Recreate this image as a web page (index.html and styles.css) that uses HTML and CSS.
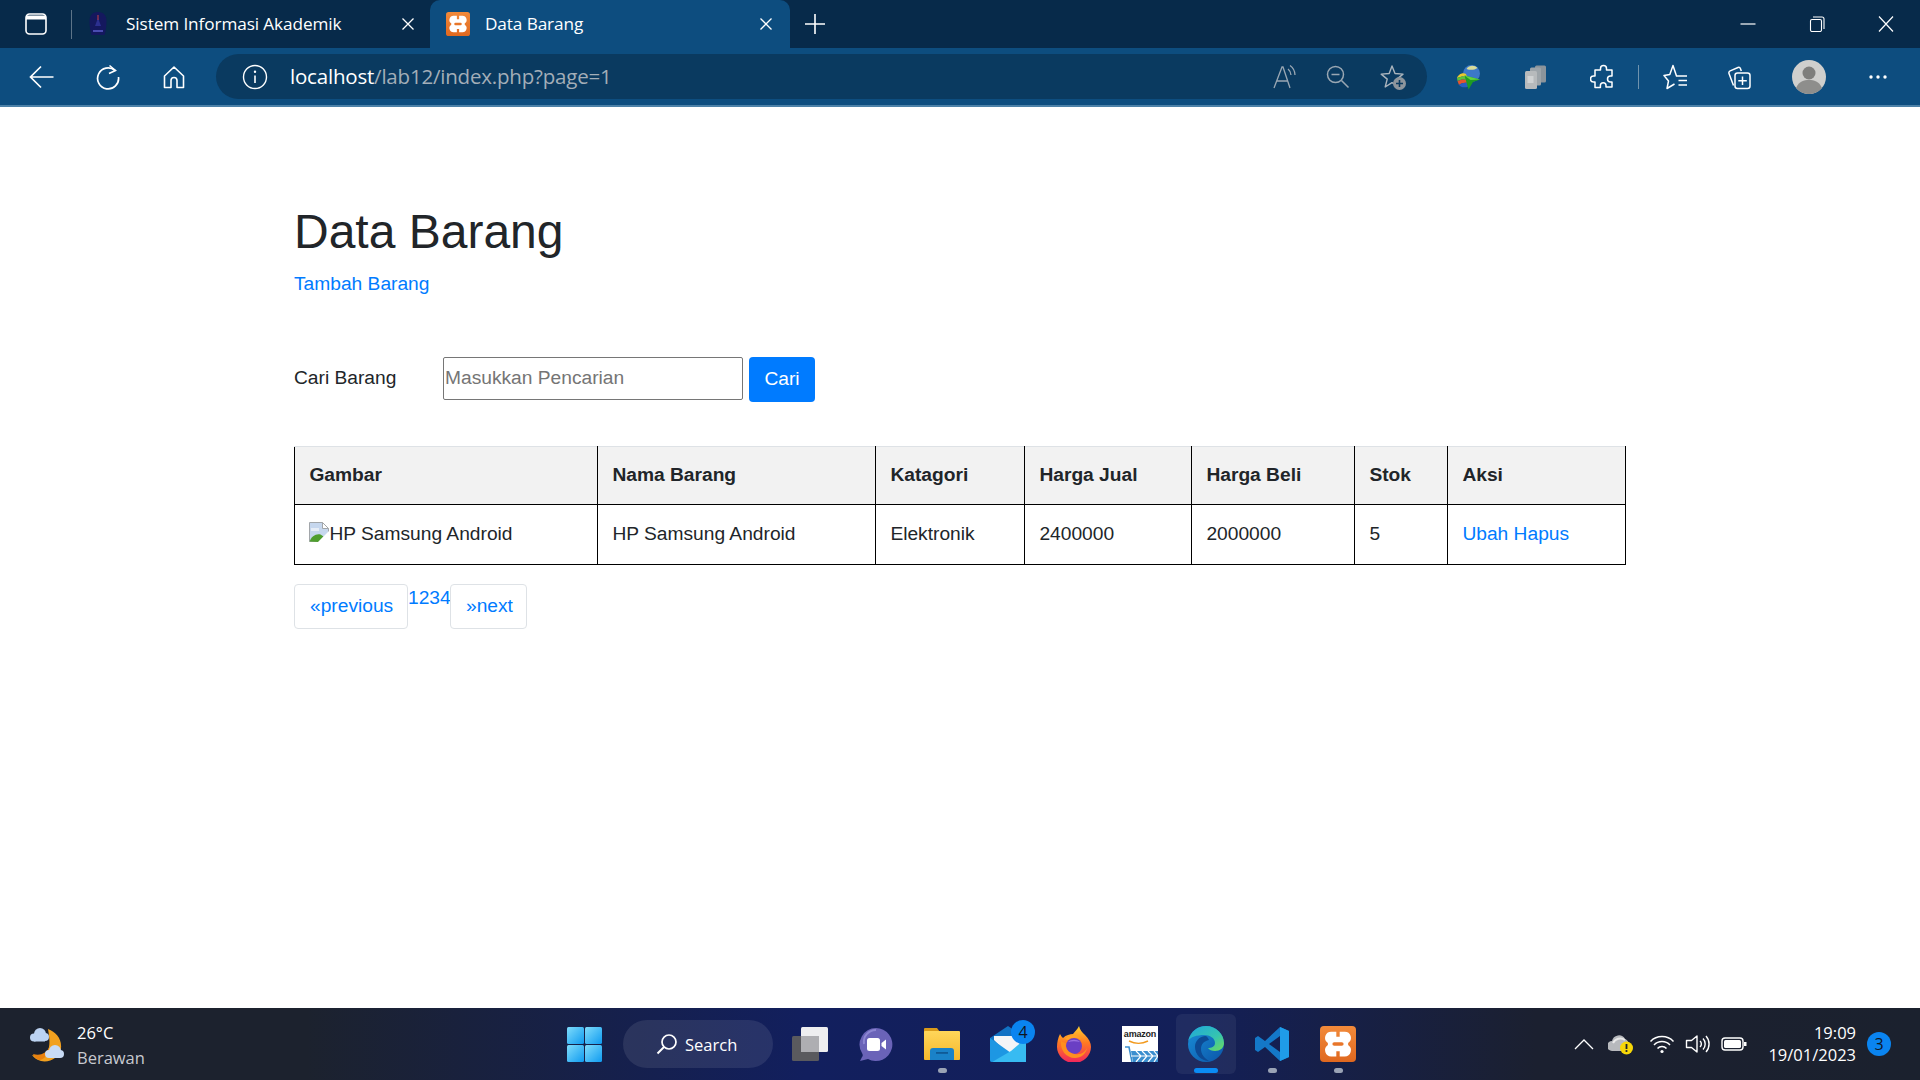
FILE: index.html
```html
<!DOCTYPE html>
<html lang="id">
<head>
<meta charset="utf-8">
<title>Data Barang</title>
<link rel="stylesheet" href="styles.css">
</head>
<body>
<svg class="defs" width="0" height="0" aria-hidden="true">
  <defs>
    <linearGradient id="xg" x1="0" y1="0" x2="0" y2="1"><stop offset="0" stop-color="#f28a3a"/><stop offset="1" stop-color="#e0681f"/></linearGradient>
    <linearGradient id="wing" x1="0" y1="0" x2="1" y2="1"><stop offset="0" stop-color="#7fdcfb"/><stop offset="1" stop-color="#0f9bf0"/></linearGradient>
    <linearGradient id="edge1" x1="0" y1="0" x2="1" y2="1"><stop offset="0" stop-color="#1fa6dc"/><stop offset=".6" stop-color="#35c4b0"/><stop offset="1" stop-color="#6fdc5a"/></linearGradient>
    <linearGradient id="edge2" x1="0" y1="0" x2="1" y2="1"><stop offset="0" stop-color="#1a8fd8"/><stop offset="1" stop-color="#0b55a8"/></linearGradient>
    <linearGradient id="fox" x1="0" y1="0" x2="0" y2="1"><stop offset="0" stop-color="#ffd12e"/><stop offset=".45" stop-color="#ff7a22"/><stop offset="1" stop-color="#f0245e"/></linearGradient>
    <linearGradient id="folder" x1="0" y1="0" x2="0" y2="1"><stop offset="0" stop-color="#ffd65a"/><stop offset="1" stop-color="#f6b82c"/></linearGradient>
    <symbol id="xampp" viewBox="0 0 32 32">
      <rect x="0" y="0" width="32" height="32" rx="3.500" fill="url(#xg)"/>
      <path d="M10 5H14.500V9.500H17.500V5H22a5.500 5.500 0 0 1 3 10.100V16.900A5.500 5.500 0 0 1 22 27H17.500V22.500H14.500V27H10a5.500 5.500 0 0 1-3-10.100V15.100A5.500 5.500 0 0 1 10 5z" fill="#fff"/>
      <rect x="11" y="14.400" width="10" height="3.200" rx="1.600" fill="#e8762a"/>
    </symbol>
  </defs>
</svg>

<header class="browser">
  <div class="tabstrip">
    <div class="strip-btn">
      <svg class="ic-24" viewBox="0 0 24 24"><rect x="2" y="2" width="20" height="20" rx="3.500" fill="none" stroke="#fff" stroke-width="1.600"/><path d="M2 5.500h20" stroke="#fff" stroke-width="4"/></svg>
    </div>
    <div class="strip-sep"></div>
    <div class="tab">
      <svg class="fav-sia" viewBox="0 0 20 26"><path d="M10 1C4 1 1.500 5 1.500 10c0 6 1 11 2 14h13c1-3 2-8 2-14C18.500 5 16 1 10 1z" fill="#14185e"/><path d="M10 7l3 8H7z" fill="#2c2f90"/><rect x="9.400" y="4" width="1.200" height="5" fill="#a83a4a"/><rect x="5" y="19" width="10" height="2" fill="#4a4cb0"/></svg>
      <span class="tab-title">Sistem Informasi Akademik</span>
      <svg class="tab-x" viewBox="0 0 12 12"><path d="M.5.5l11 11M11.500.5l-11 11" stroke="#fff" stroke-width="1.300"/></svg>
    </div>
    <div class="tab tab-active">
      <svg class="fav-x"><use href="#xampp"/></svg>
      <span class="tab-title">Data Barang</span>
      <svg class="tab-x" viewBox="0 0 12 12"><path d="M.5.5l11 11M11.500.5l-11 11" stroke="#fff" stroke-width="1.300"/></svg>
    </div>
    <div class="new-tab">
      <svg class="ic-24" viewBox="0 0 24 24"><path d="M12 2v20M2 12h20" stroke="#fff" stroke-width="1.600"/></svg>
    </div>
    <div class="win-controls">
      <div class="win-btn"><svg class="ic-16" viewBox="0 0 16 16"><path d="M0.500 8h15" stroke="#fff" stroke-width="1.200"/></svg></div>
      <div class="win-btn"><svg class="ic-16" viewBox="0 0 16 16"><rect x="1.500" y="3.500" width="11" height="12" rx="1.500" fill="none" stroke="#fff" stroke-width="1.100"/><path d="M4 1h9a2 2 0 0 1 2 2v10" fill="none" stroke="#fff" stroke-width="1.100"/></svg></div>
      <div class="win-btn"><svg class="ic-16" viewBox="0 0 16 16"><path d="M1 0.500l14 15M15 0.500L1 15.500" stroke="#fff" stroke-width="1.200"/></svg></div>
    </div>
  </div>

  <div class="toolbar">
    <div class="tool-btn"><svg class="ic-26" viewBox="0 0 26 26"><path d="M1.500 13h23M12 2.500L1.500 13 12 23.500" fill="none" stroke="#fff" stroke-width="1.700"/></svg></div>
    <div class="tool-btn"><svg class="ic-26" viewBox="0 0 26 26"><path d="M20 6.500A10.500 10.500 0 1 0 23.500 13" fill="none" stroke="#fff" stroke-width="1.700"/><path d="M14.500 1.500l6 5-6.500 3" fill="none" stroke="#fff" stroke-width="1.600"/></svg></div>
    <div class="tool-btn"><svg class="ic-26" viewBox="0 0 26 26"><path d="M13 3L3.500 12v11.500h6.500v-7a3 3 0 0 1 6 0v7h6.500V12z" fill="none" stroke="#fff" stroke-width="1.600" stroke-linejoin="round"/></svg></div>
    <div class="omnibox">
      <svg class="omni-info" viewBox="0 0 26 26"><circle cx="13" cy="13" r="11.500" fill="none" stroke="#fff" stroke-width="1.400"/><path d="M13 11.500v7.500" stroke="#fff" stroke-width="1.600"/><circle cx="13" cy="7.800" r="1.200" fill="#fff"/></svg>
      <span class="url"><span class="url-host">localhost</span>/lab12/index.php?page=1</span>
      <div class="omni-actions">
        <svg class="ic-26 omni-read" viewBox="0 0 26 26"><path d="M2 24L10 3h1l7 21M5 17h11" fill="none" stroke="#9aa7b3" stroke-width="1.300"/><path d="M16 5a8 8 0 0 1 3 6M18 1.500a12 12 0 0 1 5 9.500" fill="none" stroke="#9aa7b3" stroke-width="1.300"/></svg>
        <svg class="ic-26" viewBox="0 0 26 26"><circle cx="10.500" cy="10.500" r="8" fill="none" stroke="#9aa7b3" stroke-width="1.500"/><path d="M6.500 10.500h8M16.500 16.500l7 7" stroke="#9aa7b3" stroke-width="1.500"/></svg>
        <svg class="ic-26 omni-fav" viewBox="0 0 26 26"><path d="M12 2l3 7.500 8 .6-6 5 2 7.900-7-4.300-6.800 4.300 2-7.900-6-5 8-.6z" fill="none" stroke="#aab4bd" stroke-width="1.400" stroke-linejoin="round"/><circle cx="19.500" cy="19.500" r="6.500" fill="#8d959c"/><path d="M19.500 16v7M16 19.500h7" stroke="#0a3a60" stroke-width="1.600"/></svg>
      </div>
    </div>
    <div class="tool-btn tool-first"><svg class="ic-26" viewBox="0 0 26 26"><circle cx="15.500" cy="9.500" r="8.500" fill="#3c78c8"/><path d="M10.500 5c2-3.500 8-4.500 11-1-3 2-7 2.500-11 1z" fill="#d9dc9a"/><path d="M1 14c1-3 5-6 9-4l1 3c-4-1-7 0-10 1z" fill="#e8c92e"/><path d="M1 14c3-1 7-2 10-1v3c-3-1-7-.5-9.500 1z" fill="#5cc23a"/><path d="M1.500 17c3-1.500 6.500-2 9.500-1l.5 3c-3-.5-6 0-8.500 2z" fill="#e3552e"/><path d="M3 21c2.500-2 5.500-2.500 8.500-2l1 3.500c-4 1.500-7.500 1-9.500-1.500z" fill="#2a5ec0"/><path d="M8.500 11.500L24 15.500l-7 2.500-4.500 7.500z" fill="#1e9b22"/><path d="M8.500 11.500L24 15.500l-9.500.5z" fill="#62d23c"/></svg></div>
    <div class="tool-btn"><svg class="ic-26" viewBox="0 0 26 26"><rect x="13" y="1.500" width="11" height="17" rx="1.500" fill="#8b949b"/><rect x="8" y="3.500" width="11" height="18" rx="1.500" fill="#9da4a9"/><rect x="3" y="7" width="12" height="18" rx="1.500" fill="#b7babc"/><rect x="5.500" y="12" width="6" height="7" fill="#d0d2d3"/></svg></div>
    <div class="tool-btn"><svg class="ic-26 nudge-right" viewBox="0 0 26 26"><path d="M10.500 6V4.500a3 3 0 0 1 6 0V6h5.500v6h-1.500a3 3 0 0 0 0 6h1.500v5h-6v-1.500a2.800 2.800 0 0 0-5.600 0V23.500H5v-5.500H3.500a3 3 0 0 1 0-6H5V6z" fill="none" stroke="#fff" stroke-width="1.500" stroke-linejoin="round"/></svg></div>
    <div class="tool-sep"></div>
    <div class="tool-btn"><svg class="ic-26 nudge-right" viewBox="0 0 26 26"><path d="M24 12H13.500L10 1.500 6.800 10.500l-5.800 1 4.500 5.500-1.500 7.500 7.500-4.500" fill="none" stroke="#fff" stroke-width="1.500" stroke-linejoin="round"/><path d="M15.500 16.500H24M15.500 21H24" stroke="#fff" stroke-width="1.500"/></svg></div>
    <div class="tool-btn"><svg class="ic-26 nudge-left" viewBox="0 0 26 26"><path d="M7.500 21.500L3 9.500a2 2 0 0 1 1.200-2.600L12 3.500a2 2 0 0 1 2.500 1.200l.8 2.300" fill="none" stroke="#fff" stroke-width="1.500"/><rect x="9" y="9" width="15" height="15.500" rx="2.500" fill="none" stroke="#fff" stroke-width="1.500"/><path d="M16.500 12.500v8.500M12.300 16.700h8.500" stroke="#fff" stroke-width="1.500"/></svg></div>
    <div class="tool-btn tool-avatar"><svg class="avatar" viewBox="0 0 34 34"><circle cx="17" cy="17" r="17" fill="#cfcfcd"/><circle cx="17" cy="13" r="6.500" fill="#7e7e7c"/><path d="M4 28c3-7 8-8 13-8s10 1 13 8a17 17 0 0 1-26 0z" fill="#8e8e8c"/></svg></div>
    <div class="tool-btn tool-more"><svg class="ic-26" viewBox="0 0 26 26"><circle cx="6" cy="13" r="1.700" fill="#fff"/><circle cx="13" cy="13" r="1.700" fill="#fff"/><circle cx="20" cy="13" r="1.700" fill="#fff"/></svg></div>
  </div>
</header>

<main class="page">
  <h1 class="title">Data Barang</h1>
  <a class="link add-link" href="#">Tambah Barang</a>

  <form class="search">
    <label class="search-label" for="q">Cari Barang</label>
    <input class="search-input" id="q" type="text" placeholder="Masukkan Pencarian">
    <button class="search-btn" type="button">Cari</button>
  </form>

  <table class="data">
    <thead>
      <tr>
        <th class="c1">Gambar</th>
        <th class="c2">Nama Barang</th>
        <th class="c3">Katagori</th>
        <th class="c4">Harga Jual</th>
        <th class="c5">Harga Beli</th>
        <th class="c6">Stok</th>
        <th class="c7">Aksi</th>
      </tr>
    </thead>
    <tbody>
      <tr>
        <td class="img-cell"><svg class="broken" viewBox="0 0 20 20"><path d="M.5.5h13l6 6v13H.5z" fill="#c6d7ee" stroke="#a2a6aa"/><path d="M13.500.5v6h6z" fill="#fff" stroke="#a2a6aa"/><path d="M2 6h8v3H2z" fill="#e6edf7"/><path d="M.5 19.500c2-5 6-8 11-7l3 2-5 5.500z" fill="#4f9e2e"/><path d="M9 20L20 9v11z" fill="#fff"/></svg>HP Samsung Android</td>
        <td>HP Samsung Android</td>
        <td>Elektronik</td>
        <td>2400000</td>
        <td>2000000</td>
        <td>5</td>
        <td><a class="link" href="#">Ubah</a> <a class="link" href="#">Hapus</a></td>
      </tr>
    </tbody>
  </table>

  <nav class="pager">
    <a class="link page-box page-prev" href="#">«previous</a>
    <span class="page-nums"><a class="link" href="#">1</a><a class="link" href="#">2</a><a class="link" href="#">3</a><a class="link" href="#">4</a></span>
    <a class="link page-box page-next" href="#">»next</a>
  </nav>
</main>

<footer class="taskbar">
  <div class="weather">
    <svg class="weather-ic" viewBox="0 0 36 36"><path d="M19 3c8 3 14 10 13 19-1 9-11 15-20 13-4-1-7-3-9-6 9 2 15-1 17-8 1-6 0-12-1-18z" fill="#f2a11f"/><path d="M4 28c8 2 13-1 16-6 0 6-5 12-10 12-3-1-5-3-6-6z" fill="#e8810f"/><g fill="#bcd3f2"><circle cx="5" cy="11.500" r="4"/><circle cx="11" cy="8" r="6"/><circle cx="16" cy="11" r="4"/><rect x="5" y="10" width="11" height="5.500"/></g><g fill="#c8dbf5"><circle cx="20" cy="28" r="4"/><circle cx="26" cy="25" r="6"/><circle cx="31" cy="28" r="4"/><rect x="20" y="27" width="11" height="5"/></g></svg>
    <div class="weather-text">
      <span class="temp">26°C</span>
      <span class="cond">Berawan</span>
    </div>
  </div>
  <svg class="start" viewBox="0 0 35 35"><rect x="0" y="0" width="17" height="17" rx="1.500" fill="url(#wing)"/><rect x="18" y="0" width="17" height="17" rx="1.500" fill="url(#wing)"/><rect x="0" y="18" width="17" height="17" rx="1.500" fill="url(#wing)"/><rect x="18" y="18" width="17" height="17" rx="1.500" fill="url(#wing)"/></svg>
  <div class="search-pill">
    <svg class="pill-ic" viewBox="0 0 22 22"><circle cx="13" cy="9" r="7" fill="none" stroke="#fff" stroke-width="1.700"/><path d="M8 14l-6.500 6.500" stroke="#fff" stroke-width="1.900"/></svg>
    <span>Search</span>
  </div>
  <div class="apps">
    <div class="app"><svg class="app-ic" viewBox="0 0 36 36"><rect x="9" y="1" width="27" height="25" rx="1.500" fill="#eeeef0"/><rect x="0" y="10" width="27" height="25" rx="1.500" fill="#5a5a5e"/><rect x="9" y="10" width="18" height="16" fill="#aeaeb2"/></svg></div>
    <div class="app"><svg class="app-ic" viewBox="0 0 36 36"><path d="M18 2a16.500 16.500 0 1 1-8 31l-8 2 2-4c1-1 1-2 0-4A16.500 16.500 0 0 1 18 2z" fill="#6a63b8"/><path d="M6 18a12 12 0 0 1 12-14" fill="none" stroke="#8c86d2" stroke-width="2"/><rect x="9" y="12" width="13" height="13" rx="2.500" fill="#fff"/><path d="M23.500 17l4.500-3.500v10L23.500 20z" fill="#fff"/></svg></div>
    <div class="app"><svg class="app-ic" viewBox="0 0 36 36"><path d="M0 3a1 1 0 0 1 1-1h12l3 4H0z" fill="#d99a1a"/><rect x="0" y="5" width="36" height="29" rx="1" fill="url(#folder)"/><path d="M6 34V25a3 3 0 0 1 3-3h18a3 3 0 0 1 3 3v9z" fill="#1a82c8"/><rect x="12" y="26" width="12" height="1.800" fill="#0f5a96"/></svg><span class="dot"></span></div>
    <div class="app"><svg class="app-ic" viewBox="0 0 36 36"><path d="M0 12L18 0l18 12v24H2a2 2 0 0 1-2-2z" fill="#1172c4"/><path d="M4 10l22 0 5 10-13 8L4 14z" fill="#f4f5f7"/><path d="M0 12l21 15-19 9a2 2 0 0 1-2-2z" fill="#1d97e3"/><path d="M36 12v24H2l19-11z" fill="#37bbf2"/></svg><span class="app-badge">4</span></div>
    <div class="app"><svg class="app-ic" viewBox="0 0 36 36"><path d="M23 0c1 4 3 6 6 9 4 4 6 8 6 12a17 16 0 0 1-34 0c0-5 1-9 3-13 1 2 2 3 3 4 3-3 7-4 10-4 2-3 5-5 6-8z" fill="url(#fox)"/><circle cx="18" cy="20" r="8" fill="#6a3fc4"/><path d="M12 16c3-3 9-3 12 0-4-1-8-1-12 0z" fill="#9a6fe0"/><path d="M5 15c-1 9 5 17 14 17 6 0 11-4 12-10-2 4-6 7-12 6-7-1-10-6-9-11-2-.5-4-1-5-2z" fill="#ff8f1f"/><path d="M9 13c4-5 12-5 16 0-5-2-10-2-13 1z" fill="#ffa326"/></svg></div>
    <div class="app"><div class="amazon"><span class="amazon-word">amazon</span><svg class="amazon-art" viewBox="0 0 36 22"><path d="M7 1c6 3 13 3 19 0" fill="none" stroke="#f29a1e" stroke-width="1.400"/><path d="M3 7h4l3 15" fill="none" stroke="#3b8ecf" stroke-width="1.600"/><path d="M9 11h27v11H11z" fill="#3b8ecf"/><path d="M9 16h27M14 11l5 5-5 6M20 11l5 5-5 6M26 11l5 5-5 6M32 11l4 5-4 6" fill="none" stroke="#fff" stroke-width="1.200"/></svg></div></div>
    <div class="app app-active"><svg class="app-ic" viewBox="0 0 36 36"><circle cx="18" cy="18" r="18" fill="url(#edge2)"/><path d="M0 15C3 5 10 0 18 0c10 0 18 8 18 17 0 5-4 8-9 8-3 0-6-1-7-3 3 0 7-1 7-5 0-5-5-8-11-8-7 0-14 2-16 6z" fill="url(#edge1)"/><path d="M17 10c-6 1-10 5-10 11 0 7 6 14 14 14-5-3-8-7-8-12 0-5 3-8 8-9-1-2-2-4-4-4z" fill="#0d4a94"/></svg><span class="dot dot-active"></span></div>
    <div class="app"><svg class="app-ic" viewBox="0 0 36 36"><path d="M26 1l9 4v26l-9 4-15-14-7 5-3-2v-12l3-2 7 5z" fill="#1478c8"/><path d="M26 1l9 4v26l-9 4z" fill="#1f9ce8"/><path d="M26 10L15 18l11 8z" fill="#141f52"/></svg><span class="dot"></span></div>
    <div class="app"><svg class="app-ic"><use href="#xampp"/></svg><span class="dot"></span></div>
  </div>
  <div class="tray">
    <svg class="tray-ic chevron" viewBox="0 0 20 12"><path d="M1 11l9-9 9 9" fill="none" stroke="#fff" stroke-width="1.300"/></svg>
    <svg class="tray-ic tray-cloud" viewBox="0 0 26 22"><path d="M4 18a5 5 0 0 1 0-10 7 7 0 0 1 13-2 5 5 0 0 1 3 6v6z" fill="#b7b9bd"/><path d="M5 10a8 8 0 0 1 12-3" fill="none" stroke="#e9e9e9" stroke-width="2"/><circle cx="18.500" cy="15" r="6.500" fill="#f7d708"/><path d="M18.500 11v5" stroke="#1c222e" stroke-width="1.800"/><circle cx="18.500" cy="18" r="1.100" fill="#1c222e"/></svg>
    <svg class="tray-ic tray-wifi" viewBox="0 0 26 20"><path d="M1.500 7.500a16 16 0 0 1 23 0M5 11a11 11 0 0 1 16 0M8.500 14.500a6 6 0 0 1 9 0" fill="none" stroke="#fff" stroke-width="1.500"/><circle cx="13" cy="17.500" r="1.600" fill="#fff"/></svg>
    <svg class="tray-ic" viewBox="0 0 26 20"><path d="M1.500 6.500h5L12 2v16l-5.500-4.500h-5z" fill="none" stroke="#fff" stroke-width="1.400" stroke-linejoin="round"/><path d="M15 7a4 4 0 0 1 0 6M18 4.500a8 8 0 0 1 0 11M21 2a12 12 0 0 1 0 16" fill="none" stroke="#fff" stroke-width="1.400"/></svg>
    <svg class="tray-ic" viewBox="0 0 26 16"><rect x="1" y="2" width="21" height="12" rx="3" fill="none" stroke="#fff" stroke-width="1.400"/><rect x="3" y="4" width="17" height="8" rx="1.500" fill="#fff"/><rect x="23" y="6" width="2.500" height="4" fill="#fff"/></svg>
    <div class="clock"><span>19:09</span><span>19/01/2023</span></div>
    <span class="notif">3</span>
  </div>
</footer>
</body>
</html>
```
FILE: styles.css
```css
* { box-sizing: border-box; }
html, body { margin: 0; height: 100%; }
body {
  display: flex;
  flex-direction: column;
  height: 1080px;
  overflow: hidden;
  background: #fff;
  font-family: "Liberation Sans", Arial, sans-serif;
  color: #212529;
}
.defs { position: absolute; }
svg { display: block; flex: none; }
.ic-24 { width: 24px; height: 24px; }
.ic-16 { width: 16px; height: 16px; }
.ic-26 { width: 26px; height: 26px; }
.nudge-right { margin-left: 3px; }
.nudge-left { margin-right: 2px; }

/* browser chrome */
.browser { flex: none; font-family: "Open Sans", sans-serif; color: #fff; }
.tabstrip { display: flex; align-items: stretch; height: 48px; background: #072a4a; }
.strip-btn { width: 71px; display: flex; align-items: center; justify-content: center; }
.strip-sep { width: 1px; height: 29px; margin-top: 10px; background: #5d7488; }
.tab { display: flex; align-items: center; width: 345px; margin-left: 8px; padding: 0 11px 0 8px; font-size: 17.200px; border-radius: 10px 10px 0 0; }
.fav-sia { width: 20px; height: 26px; margin-right: 18px; }
.tab-title { flex: 1; padding-bottom: 2px; white-space: nowrap; letter-spacing: -.1px; }
.tab-x { width: 12px; height: 12px; }
.tab-active { width: 360px; margin-left: 5px; padding-left: 16px; padding-right: 18px; background: #0d4d7f; }
.fav-x { width: 24px; height: 24px; margin-right: 15px; }
.new-tab { width: 50px; display: flex; align-items: center; justify-content: center; }
.win-controls { display: flex; margin-left: auto; }
.win-btn { width: 69px; display: flex; align-items: center; justify-content: center; }

.toolbar { display: flex; align-items: center; height: 59px; padding: 0 9px; background: #0d4d7f; border-bottom: 2px solid #4c81a8; }
.tool-btn { width: 66px; height: 46px; display: flex; align-items: center; justify-content: center; }
.omnibox { display: flex; align-items: center; width: 1211px; height: 45px; margin-left: 9px; padding: 0 18px 0 26px; background: #0a3a60; border-radius: 23px; }
.omni-info { width: 26px; height: 26px; }
.url { margin-left: 22px; padding-bottom: 2px; font-size: 20.500px; color: #a3aeb8; letter-spacing: -.2px; white-space: nowrap; }
.url-host { color: #fff; }
.omni-actions { display: flex; align-items: center; gap: 29px; margin-left: auto; }
.omni-read { margin-right: -2px; }
.omni-fav { margin-right: 3px; }
.tool-first { margin-left: 9px; }
.tool-sep { width: 1px; height: 24px; background: #6f93ae; margin: 0 2px 0 4px; }
.tool-avatar { margin-left: 3px; }
.tool-more { margin-left: 3px; }
.avatar { width: 34px; height: 34px; }

/* page */
.page { flex: 1; width: 1331px; margin-left: 294px; padding-top: 96px; font-size: 19.200px; line-height: 29px; }
.title { margin: 0 0 8px; font-size: 48px; line-height: 58px; font-weight: 400; }
.link { color: #007bff; text-decoration: none; }
.add-link { display: inline-block; }
.search { display: flex; align-items: flex-start; margin-top: 59px; }
.search-label { width: 149px; margin-top: 6px; }
.search-input {
  width: 300px; height: 43px; padding: 0 1px 1px; margin: 0;
  border: 1px solid #767676; border-radius: 2px;
  font: 19.200px "Liberation Sans", Arial, sans-serif; color: #212529; background: #fff;
}
.search-input::placeholder { color: #757575; opacity: 1; }
.search-btn {
  width: 66px; height: 45px; margin-left: 6px; padding: 0 0 2px;
  border: 0; border-radius: 4px; background: #007bff; color: #fff;
  font: 19.200px "Liberation Sans", Arial, sans-serif;
}
.data { width: 1331px; margin-top: 44px; table-layout: fixed; border-collapse: collapse; }
.data th, .data td { padding: 0 14.400px 2px; text-align: left; vertical-align: middle; border: 1px solid #000; }
.data th { height: 58px; font-weight: 700; background: #f2f2f2; border-top-color: #dee2e6; }
.data td { height: 60px; }
.c1 { width: 303px; }
.c2 { width: 278px; }
.c3 { width: 149px; }
.c4 { width: 167px; }
.c5 { width: 163px; }
.c6 { width: 93px; }
.c7 { width: 178px; }
.data .img-cell { white-space: nowrap; }
.broken { display: inline-block; width: 20px; height: 20px; vertical-align: -2px; }
.pager { display: flex; align-items: flex-start; margin-top: 18px; }
.page-box { display: block; height: 45px; margin-top: 1px; padding: 6px 0 0 15px; border: 1px solid #dee2e6; border-radius: 4px; }
.page-prev { width: 114px; }
.page-next { width: 77px; }
.page-nums { width: 42px; text-align: center; }

/* taskbar */
.taskbar {
  flex: none; display: flex; align-items: center; height: 72px;
  background: linear-gradient(90deg, #1c222e 0, #1c222e 16%, #121f5e 42%, #131f58 62%, #1b2030 80%, #1b212e 100%);
  color: #fff; font-family: "Open Sans", sans-serif;
}
.weather { width: 567px; display: flex; align-items: center; padding-left: 29px; }
.weather-ic { width: 36px; height: 36px; }
.weather-text { display: flex; flex-direction: column; margin-left: 12px; padding-top: 3px; font-size: 16.500px; line-height: 24.500px; }
.cond { color: #c7cad0; }
.start { width: 35px; height: 35px; }
.search-pill { display: flex; align-items: center; width: 150px; height: 48px; margin-left: 21px; padding-left: 33px; border-radius: 24px; background: rgba(255,255,255,.09); font-size: 16.500px; }
.pill-ic { width: 22px; height: 22px; margin-right: 7px; }
.apps { display: flex; margin-left: 4px; }
.app { position: relative; width: 66px; height: 60px; display: flex; align-items: center; justify-content: center; }
.app-ic { width: 36px; height: 36px; }
.app-active { width: 60px; margin: 0 3px; background: rgba(255,255,255,.06); border-radius: 6px; }
.app-badge { position: absolute; top: 6px; left: 36px; width: 24px; height: 24px; border-radius: 50%; background: #0a84f0; color: #10151f; text-align: center; font-size: 16px; line-height: 24px; }
.dot { position: absolute; left: 29px; bottom: 1px; width: 9px; height: 5px; border-radius: 3px; background: #9aa3b5; }
.dot-active { left: 18px; width: 24px; background: #0a8cf5; }
.amazon { width: 36px; height: 36px; padding-top: 3px; background: #fff; }
.amazon-word { display: block; font: 700 9px/10px "Liberation Sans", sans-serif; color: #222; text-align: center; letter-spacing: -.2px; }
.amazon-art { width: 36px; height: 22px; margin-top: 1px; }
.tray { display: flex; align-items: center; margin-left: auto; padding-right: 29px; }
.tray-ic { width: 26px; height: 22px; margin: 0 5px; }
.tray-cloud { margin-left: 6px; margin-right: 4px; }
.chevron { width: 20px; height: 12px; margin: 0 8px; }
.tray-wifi { margin-left: 11px; }
.clock { display: flex; flex-direction: column; align-items: flex-end; width: 104px; margin-right: 11px; font-size: 16.500px; line-height: 22px; }
.notif { width: 24px; height: 24px; border-radius: 50%; background: #0a84f0; color: #10151f; text-align: center; font-size: 16px; line-height: 24px; }
```
